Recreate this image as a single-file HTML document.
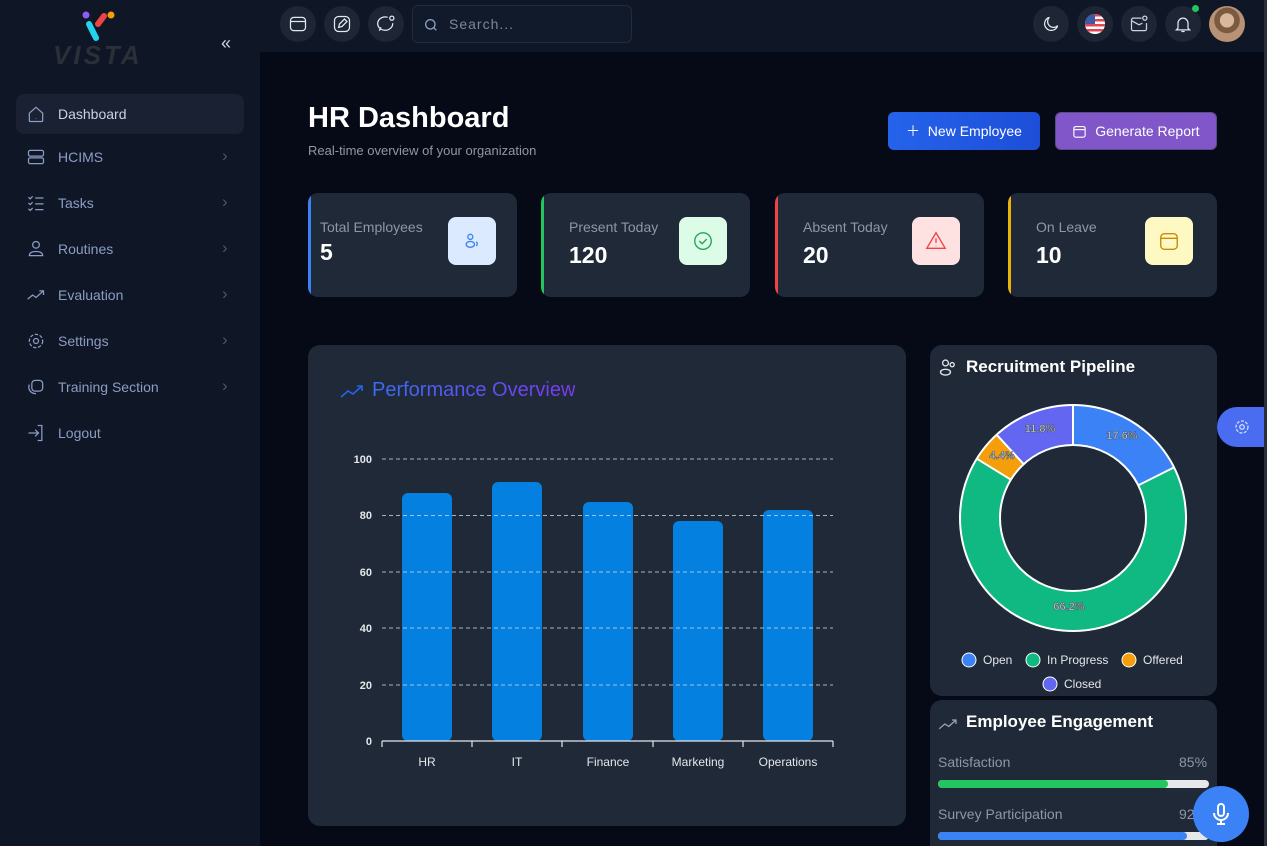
<!DOCTYPE html>
<html><head><meta charset="utf-8"><style>
*{box-sizing:border-box;margin:0;padding:0}
html{width:1267px;height:846px;overflow:hidden}
body{width:1267px;height:846px;overflow:hidden;background:#060a17;font-family:"Liberation Sans",sans-serif;position:relative;color:#fff}
.sb{position:absolute;left:0;top:0;width:260px;height:846px;background:#0f1626}
.top{position:absolute;left:260px;top:0;right:0;height:52px;background:#0f1626}
.ib{position:absolute;top:6px;width:36px;height:36px;border-radius:50%;background:#1e2535;display:flex;align-items:center;justify-content:center}
.nav{position:absolute;left:16px;width:228px;height:40px;border-radius:8px;display:flex;align-items:center;font-size:14px;color:#8b9dc3}
.nav svg{position:absolute;left:10px}
.nav span{position:absolute;left:42px}
.nav .ch{position:absolute;left:206px;top:9px;color:#4b5568;font-size:17px;font-weight:normal}
.card{position:absolute;top:193px;width:209px;height:104px;background:#1f2937;border-radius:10px;overflow:hidden}
.card .bar{position:absolute;left:0;top:0;bottom:0;width:3px}
.card .lab{position:absolute;top:26px;font-size:14px;color:#8f97a6}
.card .num{position:absolute;top:48px;font-size:23px;font-weight:bold;color:#fff}
.card .ico{position:absolute;top:24px;width:48px;height:48px;border-radius:8px;display:flex;align-items:center;justify-content:center}
.panel{position:absolute;background:#1f2937;border-radius:12px}
</style></head><body>
<div class="sb">
  <svg style="position:absolute;left:80px;top:10px" width="40" height="34"><circle cx="6" cy="5" r="3.5" fill="#8b5cf6"/><circle cx="31" cy="5" r="3.5" fill="#f59e0b"/><line x1="9" y1="14" x2="16" y2="28" stroke="#22d3ee" stroke-width="6" stroke-linecap="round"/><line x1="18" y1="14" x2="24" y2="6" stroke="#ef4444" stroke-width="6" stroke-linecap="round"/></svg>
  <div style="position:absolute;left:53px;top:40px;font-size:26px;font-weight:bold;font-style:italic;color:#2b2f38;letter-spacing:3px">VISTA</div>
  <div style="position:absolute;left:221px;top:33px;color:#cbd5e1;font-size:18px">«</div>
  <div class="nav" style="top:94px;background:#1a2132"><svg width="20" height="20" viewBox="0 0 24 24" fill="none" stroke="#8b9dc3" stroke-width="1.5"><path d="M4 11l8-7 8 7v9a1 1 0 0 1-1 1H5a1 1 0 0 1-1-1z"/><path d="M12 17v.5"/></svg><span style="color:#c8d2e6">Dashboard</span></div>
  <div class="nav" style="top:137px"><svg width="20" height="20" viewBox="0 0 24 24" fill="none" stroke="#8b9dc3" stroke-width="1.5"><rect x="3" y="4" width="18" height="7" rx="2"/><rect x="3" y="13" width="18" height="7" rx="2"/></svg><span>HCIMS</span><b class="ch">›</b></div>
  <div class="nav" style="top:183px"><svg width="20" height="20" viewBox="0 0 24 24" fill="none" stroke="#8b9dc3" stroke-width="1.5"><path d="M3 5l2 2 3-3M3 12l2 2 3-3M3 19l2 2 3-3M11 6h10M11 13h10M11 20h10"/></svg><span>Tasks</span><b class="ch">›</b></div>
  <div class="nav" style="top:229px"><svg width="20" height="20" viewBox="0 0 24 24" fill="none" stroke="#8b9dc3" stroke-width="1.5"><circle cx="12" cy="7" r="4"/><path d="M4 20c0-4 4-5 8-5s8 1 8 5z"/></svg><span>Routines</span><b class="ch">›</b></div>
  <div class="nav" style="top:275px"><svg width="20" height="20" viewBox="0 0 24 24" fill="none" stroke="#8b9dc3" stroke-width="1.5"><path d="M2 17l6-5 4 3 9-8M16 7h5v5"/></svg><span>Evaluation</span><b class="ch">›</b></div>
  <div class="nav" style="top:321px"><svg width="20" height="20" viewBox="0 0 24 24" fill="none" stroke="#8b9dc3" stroke-width="1.5"><circle cx="12" cy="12" r="3"/><circle cx="12" cy="12" r="8" stroke-dasharray="4 2"/></svg><span>Settings</span><b class="ch">›</b></div>
  <div class="nav" style="top:367px"><svg width="20" height="20" viewBox="0 0 24 24" fill="none" stroke="#8b9dc3" stroke-width="1.5"><rect x="7" y="4" width="13" height="13" rx="4"/><path d="M4 9c-2 5 1 11 8 11"/></svg><span>Training Section</span><b class="ch">›</b></div>
  <div class="nav" style="top:413px"><svg width="20" height="20" viewBox="0 0 24 24" fill="none" stroke="#8b9dc3" stroke-width="1.5"><path d="M14 3h5v18h-5M3 12h12M11 8l4 4-4 4"/></svg><span>Logout</span></div>
</div>
<div class="top">
  <div class="ib" style="left:20px"><svg width="20" height="20" viewBox="0 0 24 24" fill="none" stroke="#e2e8f0" stroke-width="1.5"><rect x="3" y="4" width="18" height="16" rx="4"/><path d="M3 9h18"/></svg></div>
  <div class="ib" style="left:64px"><svg width="20" height="20" viewBox="0 0 24 24" fill="none" stroke="#e2e8f0" stroke-width="1.5"><rect x="3" y="3" width="18" height="18" rx="5"/><path d="M8 16l1-4 6-6 3 3-6 6z"/></svg></div>
  <div class="ib" style="left:108px"><svg width="20" height="20" viewBox="0 0 24 24" fill="none" stroke="#e2e8f0" stroke-width="1.5"><path d="M14 4a9 8 0 1 0 6 7M4 20l2-4"/><circle cx="19" cy="5" r="2.5"/></svg></div>
  <div style="position:absolute;left:152px;top:5px;width:220px;height:38px;border:1px solid #232c3d;border-radius:6px;background:#111a2b"><svg style="position:absolute;left:10px;top:11px" width="16" height="16" viewBox="0 0 24 24" fill="none" stroke="#8b9dc3" stroke-width="2"><circle cx="11" cy="11" r="7"/><path d="M20 20l-4-4"/></svg><span style="position:absolute;left:36px;top:10px;font-size:14px;color:#7c879c;letter-spacing:1px">Search...</span></div>
  <div class="ib" style="left:773px"><svg width="20" height="20" viewBox="0 0 24 24" fill="none" stroke="#e2e8f0" stroke-width="1.5"><path d="M20 14A8 8 0 1 1 10 4a7 7 0 0 0 10 10z"/></svg></div>
  <div class="ib" style="left:817px"><svg width="20" height="20" viewBox="0 0 20 20"><clipPath id="c"><circle cx="10" cy="10" r="10"/></clipPath><g clip-path="url(#c)"><rect width="20" height="20" fill="#fff"/><rect y="0" width="20" height="2.5" fill="#e04552"/><rect y="5" width="20" height="2.5" fill="#e04552"/><rect y="10" width="20" height="2.5" fill="#e04552"/><rect y="15" width="20" height="2.5" fill="#e04552"/><rect width="10" height="10" fill="#3c5aa8"/></g></svg></div>
  <div class="ib" style="left:861px"><svg width="20" height="20" viewBox="0 0 24 24" fill="none" stroke="#cbd5e1" stroke-width="1.5"><path d="M15 5H5a2 2 0 0 0-2 2v11a2 2 0 0 0 2 2h14a2 2 0 0 0 2-2v-7"/><path d="M3 8l9 5 4-2"/><circle cx="19" cy="5" r="2.5"/></svg></div>
  <div class="ib" style="left:905px"><svg width="20" height="20" viewBox="0 0 24 24" fill="none" stroke="#e2e8f0" stroke-width="1.5"><path d="M6 17V11a6 6 0 0 1 12 0v6l2 2H4zM10 21h4"/></svg></div>
  <div style="position:absolute;left:932px;top:5px;width:7px;height:7px;border-radius:50%;background:#22c55e"></div>
  <div style="position:absolute;left:949px;top:6px;width:36px;height:36px;border-radius:50%;background:radial-gradient(circle at 50% 40%,#d9b79a 0 25%,#7a5a40 26% 45%,#b89275 46%)"></div>
</div>

<div style="position:absolute;left:308px;top:102px;font-size:29px;font-weight:bold">HR Dashboard</div>
<div style="position:absolute;left:308px;top:143px;font-size:13px;color:#8f97a6">Real-time overview of your organization</div>
<div style="position:absolute;left:888px;top:112px;width:152px;height:38px;border-radius:6px;background:linear-gradient(90deg,#2563eb,#1d4ed8);font-size:14px;display:flex;align-items:center;justify-content:center">＋&nbsp; New Employee</div>
<div style="position:absolute;left:1055px;top:112px;width:162px;height:38px;border-radius:6px;background:#8056c9;border:1px solid #5b4b8a;font-size:14px;display:flex;align-items:center;justify-content:center"><svg width="15" height="15" viewBox="0 0 24 24" fill="none" stroke="#fff" stroke-width="1.8"><rect x="3" y="4" width="18" height="17" rx="3"/><path d="M3 9h18"/></svg>&nbsp;&nbsp;Generate Report</div>

<div class="card" style="left:308px"><div class="bar" style="background:#3b82f6"></div><div class="lab" style="left:12px">Total Employees</div><div class="num" style="left:12px;top:46px">5</div><div class="ico" style="left:140px;background:#dbeafe"><svg width="20" height="20" viewBox="0 0 24 24" fill="none" stroke="#3b82f6" stroke-width="1.6"><circle cx="10" cy="7" r="3"/><ellipse cx="10" cy="16" rx="5" ry="3.5"/><path d="M17 13a3 3 0 0 1 0 5"/></svg></div></div>
<div class="card" style="left:541px"><div class="bar" style="background:#22c55e"></div><div class="lab" style="left:28px">Present Today</div><div class="num" style="left:28px;top:49px">120</div><div class="ico" style="left:138px;background:#dcfce7"><svg width="22" height="22" viewBox="0 0 24 24" fill="none" stroke="#22a55e" stroke-width="1.5"><circle cx="12" cy="12" r="9"/><path d="M8 12l3 3 5-5"/></svg></div></div>
<div class="card" style="left:775px"><div class="bar" style="background:#ef4444"></div><div class="lab" style="left:28px">Absent Today</div><div class="num" style="left:28px;top:49px">20</div><div class="ico" style="left:137px;background:#fee2e2"><svg width="22" height="22" viewBox="0 0 24 24" fill="none" stroke="#ef4444" stroke-width="1.5"><path d="M12 3L2 20h20z"/><path d="M12 9v5M12 17v.5"/></svg></div></div>
<div class="card" style="left:1008px"><div class="bar" style="background:#eab308"></div><div class="lab" style="left:28px">On Leave</div><div class="num" style="left:28px;top:49px">10</div><div class="ico" style="left:137px;background:#fef9c3"><svg width="22" height="22" viewBox="0 0 24 24" fill="none" stroke="#ca8a04" stroke-width="1.5"><rect x="3" y="4" width="18" height="17" rx="4"/><path d="M3 9h18"/></svg></div></div>

<div class="panel" style="left:308px;top:345px;width:598px;height:481px"></div>
<svg style="position:absolute;left:340px;top:381px" width="24" height="20" viewBox="0 0 24 20" fill="none" stroke="#2563eb" stroke-width="1.6"><path d="M1 16l7-6 5 3 9-8M17 5h5v5"/></svg>
<div style="position:absolute;left:372px;top:379px;font-size:20px;background:linear-gradient(90deg,#3b6df0,#7c3aed);-webkit-background-clip:text;color:transparent">Performance Overview</div>
<svg style="position:absolute;left:340px;top:440px" width="520" height="340">
  <g font-size="11" font-weight="bold" fill="#e5e7eb" text-anchor="end">
    <text x="32" y="23">100</text><text x="32" y="79">80</text><text x="32" y="136">60</text><text x="32" y="192">40</text><text x="32" y="249">20</text><text x="32" y="305">0</text>
  </g>
  <g fill="#0380e0">
    <rect x="62" y="53" width="50" height="248" rx="6"/><rect x="152" y="42" width="50" height="259" rx="6"/><rect x="243" y="62" width="50" height="239" rx="6"/><rect x="333" y="81" width="50" height="220" rx="6"/><rect x="423" y="70" width="50" height="231" rx="6"/>
  </g>
  <g stroke="#cbd5e1" stroke-dasharray="4 3" stroke-width="1" opacity=".8">
    <line x1="42" y1="19" x2="493" y2="19"/><line x1="42" y1="75.5" x2="493" y2="75.5"/><line x1="42" y1="132" x2="493" y2="132"/><line x1="42" y1="188" x2="493" y2="188"/><line x1="42" y1="245" x2="493" y2="245"/>
  </g>
  <path d="M42 301H493M42 301v6M132 301v6M222 301v6M313 301v6M403 301v6M493 301v6" stroke="#e5e7eb" stroke-width="1.2"/>
  <g font-size="12" fill="#e5e7eb" text-anchor="middle">
    <text x="87" y="326">HR</text><text x="177" y="326">IT</text><text x="268" y="326">Finance</text><text x="358" y="326">Marketing</text><text x="448" y="326">Operations</text>
  </g>
</svg>

<div class="panel" style="left:930px;top:345px;width:287px;height:351px"></div>
<svg style="position:absolute;left:938px;top:358px" width="20" height="20" viewBox="0 0 24 24" fill="none" stroke="#e5e7eb" stroke-width="1.6"><circle cx="9" cy="6" r="3.5"/><ellipse cx="9" cy="17" rx="6" ry="3.5"/><circle cx="17" cy="8" r="2.5"/></svg>
<div style="position:absolute;left:966px;top:357px;font-size:17px;font-weight:bold">Recruitment Pipeline</div>
<svg style="position:absolute;left:930px;top:345px" width="287" height="351">
  <g transform="translate(143,173)">
    <g transform="rotate(-90)" fill="none" stroke-width="40">
      <circle r="93" stroke="#3b82f6" stroke-dasharray="102.8 600"/>
      <circle r="93" stroke="#10b981" stroke-dasharray="386.8 600" stroke-dashoffset="-102.8"/>
      <circle r="93" stroke="#f59e0b" stroke-dasharray="25.7 600" stroke-dashoffset="-489.6"/>
      <circle r="93" stroke="#6366f1" stroke-dasharray="68.9 600" stroke-dashoffset="-515.3"/>
    </g>
    <circle r="113" fill="none" stroke="#fff" stroke-width="2"/>
    <circle r="73" fill="#1f2937" stroke="#fff" stroke-width="2"/>
    <path d="M0-73V-113M65.3-32.7L101-50.6M-62.1-38.3L-96.2-59.3M-49.3-53.8L-76.4-83.3" stroke="#fff" stroke-width="2"/>
  </g>
  <g font-size="11" font-weight="bold" fill="#d1d5db" text-anchor="middle" stroke="#4b5563" stroke-width=".6">
    <text x="192" y="94">17.6%</text><text x="110" y="87">11.8%</text><text x="72" y="114">4.4%</text><text x="139" y="265">66.2%</text>
  </g>
  <g font-size="12" fill="#e5e7eb" stroke="#fff" stroke-width="0">
    <circle cx="39" cy="315" r="7" fill="#3b82f6" stroke-width="1"/><text x="53" y="319">Open</text>
    <circle cx="103" cy="315" r="7" fill="#10b981" stroke-width="1"/><text x="117" y="319">In Progress</text>
    <circle cx="199" cy="315" r="7" fill="#f59e0b" stroke-width="1"/><text x="213" y="319">Offered</text>
    <circle cx="120" cy="339" r="7" fill="#6366f1" stroke-width="1"/><text x="134" y="343">Closed</text>
  </g>
</svg>

<div class="panel" style="left:930px;top:700px;width:287px;height:160px"></div>
<svg style="position:absolute;left:938px;top:716px" width="20" height="16" viewBox="0 0 24 20" fill="none" stroke="#9ca3af" stroke-width="1.6"><path d="M1 16l7-6 5 3 9-8M17 5h5v5"/></svg>
<div style="position:absolute;left:966px;top:712px;font-size:17px;font-weight:bold">Employee Engagement</div>
<div style="position:absolute;left:938px;top:754px;font-size:14px;color:#8f97a6">Satisfaction</div>
<div style="position:absolute;left:1179px;top:754px;font-size:14px;color:#8f97a6">85%</div>
<div style="position:absolute;left:938px;top:780px;width:271px;height:8px;border-radius:4px;background:#e5e7eb"><div style="width:230px;height:8px;border-radius:4px;background:#22c55e"></div></div>
<div style="position:absolute;left:938px;top:806px;font-size:14px;color:#8f97a6">Survey Participation</div>
<div style="position:absolute;left:1179px;top:806px;font-size:14px;color:#8f97a6">92%</div>
<div style="position:absolute;left:938px;top:832px;width:271px;height:8px;border-radius:4px;background:#e5e7eb"><div style="width:249px;height:8px;border-radius:4px;background:#3b82f6"></div></div>

<div style="position:absolute;left:1217px;top:407px;width:50px;height:40px;border-radius:20px 0 0 20px;background:#4a6cf0;display:flex;align-items:center;justify-content:center"><svg width="18" height="18" viewBox="0 0 24 24" fill="none" stroke="#dbe4ff" stroke-width="1.6"><circle cx="12" cy="12" r="3"/><circle cx="12" cy="12" r="8" stroke-dasharray="4 2"/></svg></div>
<div style="position:absolute;left:1193px;top:786px;width:56px;height:56px;border-radius:50%;background:#3b82f6;display:flex;align-items:center;justify-content:center"><svg width="24" height="24" viewBox="0 0 24 24" fill="none" stroke="#fff" stroke-width="2"><rect x="9" y="2" width="6" height="12" rx="3"/><path d="M5 11a7 7 0 0 0 14 0M12 18v4M8 22h8"/></svg></div>
<div style="position:absolute;left:1264px;top:0;width:3px;height:846px;background:#2a2f3a"></div>
</body></html>
